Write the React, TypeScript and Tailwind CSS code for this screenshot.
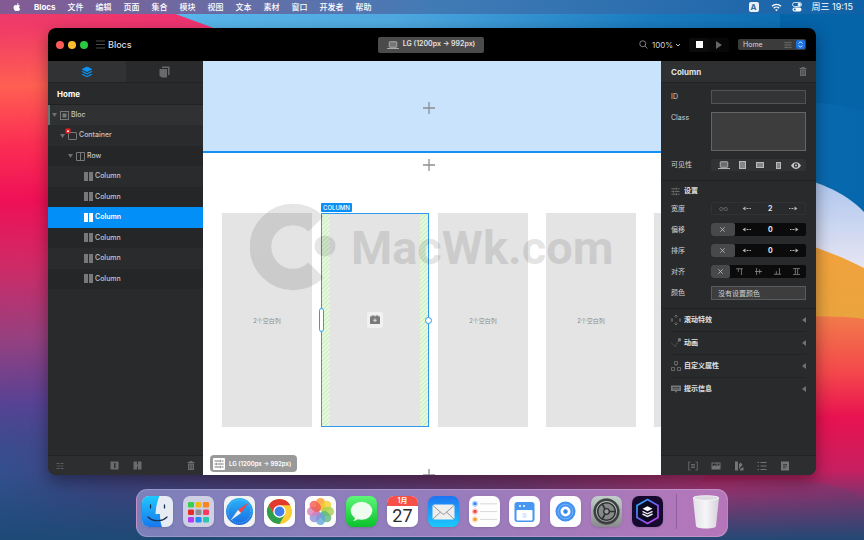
import React from 'react';

const MENUS = ['文件', '编辑', '页面', '集合', '模块', '视图', '文本', '素材', '窗口', '开发者', '帮助'];

function Wallpaper() {
  return (
    <svg className="absolute inset-0 h-full w-full" viewBox="0 0 864 540" preserveAspectRatio="none" aria-hidden="true">
      <defs>
        <linearGradient id="sky" x1="0" y1="0" x2="1" y2="0">
          <stop offset="0" stopColor="#5bb8ee" />
          <stop offset="0.35" stopColor="#4fa9e0" />
          <stop offset="0.7" stopColor="#1a7cc0" />
          <stop offset="1" stopColor="#0566ab" />
        </linearGradient>
        <linearGradient id="base" x1="0" y1="0" x2="1" y2="0">
          <stop offset="0" stopColor="#33508f" />
          <stop offset="0.12" stopColor="#42417f" />
          <stop offset="0.35" stopColor="#5c3770" />
          <stop offset="0.6" stopColor="#823069" />
          <stop offset="0.82" stopColor="#c02a6c" />
          <stop offset="1" stopColor="#a52b68" />
        </linearGradient>
        <linearGradient id="floor" x1="0" y1="0" x2="0" y2="1">
          <stop offset="0" stopColor="#1b4a75" stopOpacity="0" />
          <stop offset="1" stopColor="#1b4a75" stopOpacity="0.95" />
        </linearGradient>
        <linearGradient id="leftRed" gradientUnits="userSpaceOnUse" x1="0" y1="0" x2="12" y2="480">
          <stop offset="0" stopColor="#e8386f" />
          <stop offset="0.06" stopColor="#f03c66" />
          <stop offset="0.18" stopColor="#ff5f52" />
          <stop offset="0.3" stopColor="#fb2e53" />
          <stop offset="0.42" stopColor="#ef1057" />
          <stop offset="0.55" stopColor="#d02a66" />
          <stop offset="0.7" stopColor="#98407f" />
          <stop offset="0.84" stopColor="#584294" />
          <stop offset="1" stopColor="#3a4a88" stopOpacity="0" />
        </linearGradient>
        <linearGradient id="topPink" gradientUnits="userSpaceOnUse" x1="20" y1="0" x2="160" y2="0">
          <stop offset="0" stopColor="#ee3470" stopOpacity="0" />
          <stop offset="1" stopColor="#ee3470" />
        </linearGradient>
        <linearGradient id="white" x1="0" y1="0" x2="0" y2="1">
          <stop offset="0" stopColor="#aac4ee" />
          <stop offset="1" stopColor="#eee9f3" />
        </linearGradient>
        <linearGradient id="orange" x1="0" y1="0" x2="0" y2="1">
          <stop offset="0" stopColor="#f2a13d" />
          <stop offset="1" stopColor="#e9a43d" />
        </linearGradient>
        <linearGradient id="rightRed" x1="0" y1="0" x2="0" y2="1">
          <stop offset="0" stopColor="#f27a4a" />
          <stop offset="0.3" stopColor="#f4484b" />
          <stop offset="0.55" stopColor="#e81250" />
          <stop offset="1" stopColor="#b52668" />
        </linearGradient>
      </defs>
      <rect width="864" height="540" fill="url(#base)" />
      <path d="M140 0H864V330H400Z" fill="url(#sky)" />
      <path d="M0 0H130L175 14L216 29L300 480H0Z" fill="url(#leftRed)" />
      <path d="M0 0H130L175 14L216 29H0Z" fill="url(#topPink)" />
      <path d="M780 100C820 102 850 106 864 110V0H780Z" fill="#0563a8" />
      <path d="M780 174C815 179 845 192 864 212V280H780Z" fill="url(#white)" />
      <path d="M780 236C815 246 845 258 864 268V325H780Z" fill="url(#orange)" />
      <path d="M780 318C810 316 845 316 864 319V500C840 480 800 478 700 482L780 400Z" fill="url(#rightRed)" />
      <rect y="470" width="864" height="70" fill="url(#floor)" />
    </svg>
  );
}

function MenuBar() {
  return (
    <header className="relative flex h-[14px] items-center justify-between bg-linear-to-r from-[#835a93] via-[#417bb6] to-[#0e61a7] pr-[11px] pl-[12px] text-[8px] leading-[14px] font-medium text-white">
      <nav className="flex items-center gap-[12px]">
        <svg width="10" height="10" viewBox="0 0 24 24" fill="#fff" aria-label="Apple">
          <path d="M17.1 12.7c0-2.5 2-3.7 2.1-3.8-1.2-1.7-3-1.9-3.6-2-1.500-.15-3 .9-3.800.9-.8 0-2-.9-3.200-.87-1.700.02-3.200.96-4.100 2.450-1.700 3-.4 7.500 1.300 10 .8 1.200 1.800 2.500 3.100 2.450 1.250-.05 1.700-.8 3.250-.8 1.500 0 1.900.8 3.200.78 1.350-.02 2.200-1.200 3-2.400.95-1.400 1.350-2.700 1.350-2.800-.03 0-2.600-1-2.600-3.910zM14.700 5.300c.7-.8 1.150-2 1-3.100-1 .04-2.200.66-2.900 1.480-.63.73-1.200 1.900-1.040 3 1.100.09 2.240-.56 2.940-1.380z" />
        </svg>
        <button type="button" className="font-bold">Blocs</button>
        {MENUS.map((m) => (
          <button type="button" key={m}>{m}</button>
        ))}
      </nav>
      <div className="flex items-center gap-[10px]">
        <span className="mr-[2px] flex h-[10px] w-[10px] items-center justify-center rounded-xs bg-white/90 text-[8px] font-bold text-[#33699c]">A</span>
        <svg width="11" height="9" viewBox="0 0 22 18" fill="none" stroke="#fff" strokeWidth="2.600" aria-label="Wi-Fi">
          <path d="M2 6.500C7 1.500 15 1.500 20 6.500M5.500 10.500c3-3 8-3 11 0" />
          <path d="M11 16.500l-3-3.200c1.700-1.400 4.300-1.400 6 0z" fill="#fff" stroke="none" />
        </svg>
        <svg width="10" height="10" viewBox="0 0 20 20" aria-label="Control center">
          <rect x="1" y="1" width="18" height="8" rx="4" fill="none" stroke="#fff" strokeWidth="1.600" />
          <circle cx="14.500" cy="5" r="3" fill="#fff" />
          <rect x="1" y="11" width="18" height="8" rx="4" fill="#fff" />
          <circle cx="5.500" cy="15" r="2.200" fill="#2a70ae" />
        </svg>
        <time className="text-[9px] font-normal">周三 19:15</time>
      </div>
    </header>
  );
}

function Laptop({ className, w = 12 }: { className?: string; w?: number }) {
  return (
    <svg className={className} width={w} height="10" viewBox="0 0 24 20" fill="none" aria-hidden="true">
      <rect x="4.500" y="3.500" width="15" height="11" rx="1" fill="currentColor" fillOpacity="0.450" stroke="currentColor" strokeWidth="2" />
      <path d="M0 17h24" stroke="currentColor" strokeWidth="2" />
    </svg>
  );
}

function Sliders({ className, size = 10 }: { className?: string; size?: number }) {
  return (
    <svg className={className} width={size} height={size} viewBox="0 0 20 20" fill="none" stroke="currentColor" strokeWidth="1.600" aria-hidden="true">
      <path d="M1 4h10M15 4h4M1 10h3M8 10h11M1 16h10M15 16h4M12.500 1.500v5M5.500 7.500v5M12.500 13.500v5" />
    </svg>
  );
}

function TitleBar() {
  return (
    <div className="grid h-[33px] grid-cols-[1fr_auto_1fr] items-center bg-black pr-[10px] pl-2">
      <div className="flex items-center">
        <div className="mr-2 flex gap-1">
          <button type="button" aria-label="Close" className="h-2 w-2 rounded-full bg-[#fc5b57]" />
          <button type="button" aria-label="Minimise" className="h-2 w-2 rounded-full bg-[#fdbc2e]" />
          <button type="button" aria-label="Zoom" className="h-2 w-2 rounded-full bg-[#29c940]" />
        </div>
        <svg width="9" height="9" viewBox="0 0 9 9" stroke="#4b4b4b" aria-hidden="true">
          <path d="M0 1h9M0 4.500h9M0 8h9" />
        </svg>
        <h1 className="ml-[3px] text-[9px] leading-3 font-medium text-[#dedede]">Blocs</h1>
      </div>
      <button type="button" className="flex h-4 w-[106px] items-center justify-center gap-[4px] rounded-xs bg-[#4b4b4b] text-[7px] font-semibold text-[#e4e4e4]">
        <Laptop className="text-[#a9a9a9]" />
        LG (1200px → 992px)
      </button>
      <div className="flex items-center justify-end">
        <svg width="9" height="9" viewBox="0 0 18 18" fill="none" stroke="#8d8d8d" strokeWidth="1.800" aria-hidden="true">
          <circle cx="7.500" cy="7.500" r="6" />
          <path d="M12 12l5 5" />
        </svg>
        <label className="relative ml-1 flex w-[29px] items-center">
          <select aria-label="Zoom level" className="w-full appearance-none text-[8px] leading-3 text-[#d6d6d6]">
            <option>100%</option>
          </select>
          <svg className="absolute right-0" width="6" height="4" viewBox="0 0 6 4" fill="none" stroke="#c4c4c4" aria-hidden="true">
            <path d="M1 1l2 2 2-2" />
          </svg>
        </label>
        <button type="button" aria-label="Stop" className="ml-2 flex h-[14px] w-5 items-center justify-center rounded-xs bg-[#0b0b0b]">
          <span className="h-[7px] w-[7px] bg-white" />
        </button>
        <button type="button" aria-label="Play" className="flex h-[14px] w-5 items-center justify-center rounded-xs bg-[#070707]">
          <svg width="6" height="8" viewBox="0 0 6 8" fill="#666"><path d="M0 0l6 4-6 4z" /></svg>
        </button>
        <label className="relative ml-[9px] flex h-[11px] w-[68px] items-center rounded-xs bg-[#3b3b3b]">
          <select aria-label="Page" className="w-full appearance-none pl-[5px] text-[7px] leading-[11px] text-[#d8d8d8]">
            <option>Home</option>
          </select>
          <Sliders className="absolute right-[14px] text-[#8b8b8b]" size={8} />
          <svg className="absolute right-px" width="9" height="9" viewBox="0 0 18 18" aria-hidden="true">
            <rect width="18" height="18" rx="4" fill="#1a72e4" />
            <path d="M5.500 7L9 3.500 12.500 7M5.500 11L9 14.500 12.500 11" fill="none" stroke="#fff" strokeWidth="1.800" />
          </svg>
        </label>
      </div>
    </div>
  );
}

type NodeKind = 'bloc' | 'container' | 'row' | 'column';
const TREE: { kind: NodeKind; label: string; selected?: boolean }[] = [
  { kind: 'bloc', label: 'Bloc' },
  { kind: 'container', label: 'Container' },
  { kind: 'row', label: 'Row' },
  { kind: 'column', label: 'Column' },
  { kind: 'column', label: 'Column' },
  { kind: 'column', label: 'Column', selected: true },
  { kind: 'column', label: 'Column' },
  { kind: 'column', label: 'Column' },
  { kind: 'column', label: 'Column' },
];

const ROW_PADDING: Record<NodeKind, string> = {
  bloc: 'pl-[4px]',
  container: 'pl-[12px]',
  row: 'pl-[20px]',
  column: 'pl-[36px]',
};

function NodeIcon({ kind, selected }: { kind: NodeKind; selected?: boolean }) {
  const c = selected ? '#ffffff' : '#77787a';
  return (
    <svg className="overflow-visible" width="9" height="9" viewBox="0 0 9 9" fill="none" stroke={c} aria-hidden="true">
      {kind === 'bloc' && (
        <>
          <rect x="0.500" y="0.500" width="8" height="8" />
          <rect x="2.500" y="2.500" width="4" height="4" fill={c} stroke="none" />
        </>
      )}
      {kind === 'container' && (
        <>
          <rect x="0.500" y="1.500" width="8" height="7" rx="0.500" />
          <rect x="-2.500" y="-2.500" width="5" height="5" rx="0.500" fill="#ee1c25" stroke="none" />
          <rect x="-1" y="-0.500" width="2" height="1.500" fill="#fff" stroke="none" />
        </>
      )}
      {kind === 'row' && <path d="M0.500 0.500h8v8h-8zM4.500 0.500v8" />}
      {kind === 'column' && <path d="M0 0h4v9H0zM5 0h4v9H5z" fill={c} stroke="none" />}
    </svg>
  );
}

function TreePanel() {
  return (
    <aside className="flex w-[155px] shrink-0 flex-col bg-[#292a2b] text-[#c4c4c4]">
      <div className="grid h-[22px] grid-cols-2 border-b border-[#222324]">
        <button type="button" aria-label="Layers" className="flex items-center justify-center bg-[#303234]">
          <svg width="12" height="12" viewBox="0 0 24 24" fill="#0b93f6">
            <path d="M12 1l11 5.500L12 12 1 6.500z" />
            <path d="M3.600 10L1 11.500 12 17l11-5.500-2.600-1.500L12 14.300zM3.600 15.500L1 17l11 5.500L23 17l-2.600-1.500-8.400 4.300z" />
          </svg>
        </button>
        <button type="button" aria-label="Assets" className="flex items-center justify-center">
          <svg width="11" height="12" viewBox="0 0 22 24" fill="#68696a">
            <path d="M6 1h15v17h-3V4H6z" />
            <path d="M1 6h15v17H5l-4-4z" />
          </svg>
        </button>
      </div>
      <h2 className="flex h-[22px] items-center border-b border-[#202122] pl-[9px] text-[8px] font-bold text-white">Home</h2>
      <ul className="grid h-[184px] auto-rows-fr">
        {TREE.map((n, i) => (
          <li
            key={i}
            className={n.selected ? 'bg-[#038ff8] text-white' : i === 0 ? 'border-l-2 border-[#6a7470] bg-[#303132]' : i % 2 ? 'bg-[#2a2b2c]' : 'bg-[#252628]'}
          >
            <button
              type="button"
              className={`flex h-full w-full items-center text-left text-[7px] ${n.selected ? 'font-semibold' : 'font-medium'} ${i === 0 ? 'pl-[2px]' : ROW_PADDING[n.kind]}`}
            >
              {n.kind !== 'column' && (
                <svg className="mr-[3px]" width="5" height="4" viewBox="0 0 5 4" fill="#6e6f70" aria-hidden="true">
                  <path d="M0 0h5L2.500 4z" />
                </svg>
              )}
              <NodeIcon kind={n.kind} selected={n.selected} />
              <span className="ml-[2px]">{n.label}</span>
            </button>
          </li>
        ))}
      </ul>
      <div className="mt-auto flex h-5 items-center border-t border-[#222324] bg-[#2c2e2f] px-2 text-[#6a6b6c]">
        <button type="button" aria-label="Tree options" className="mr-auto">
          <svg width="8" height="8" viewBox="0 0 16 16" stroke="currentColor" strokeWidth="1.600">
            <path d="M1 3h6M9 3h6M5 8h4M11 8h3M1 13h6M9 13h6M1 8h2" />
          </svg>
        </button>
        <button type="button" aria-label="Insert row">
          <svg width="9" height="9" viewBox="0 0 18 18" fill="currentColor">
            <path fillRule="evenodd" d="M1 1h16v16H1zM8 4v10h3V4z" />
          </svg>
        </button>
        <button type="button" aria-label="Split column" className="mr-[45px] ml-[14px]">
          <svg width="9" height="9" viewBox="0 0 18 18" fill="currentColor">
            <path d="M1 1h7v6h2V1h7v16h-7v-6H8v6H1z" />
          </svg>
        </button>
        <button type="button" aria-label="Delete"><Trash /></button>
      </div>
    </aside>
  );
}

function Trash() {
  return (
    <svg width="8" height="9" viewBox="0 0 16 18" fill="#6a6b6c" aria-hidden="true">
      <path d="M5 0h6v2h4v2H1V2h4z" />
      <path fillRule="evenodd" d="M2 5h12v13H2zM5 7v9h1V7zm2.500 0v9h1V7zM10 7v9h1V7z" />
    </svg>
  );
}

function Plus() {
  return (
    <svg width="12" height="12" viewBox="0 0 12 12" stroke="#8c9093" aria-hidden="true">
      <path d="M6 0v12M0 6h12" strokeWidth="1.300" />
    </svg>
  );
}

function EmptyColumn({ label }: { label?: string }) {
  return (
    <div className="w-[108px] shrink-0 px-[9px]">
      <div className="flex h-full items-center justify-center bg-[#e4e4e4] text-[6px] text-[#8c8c8c]">{label}</div>
    </div>
  );
}

const HATCH = 'w-[8px] bg-[repeating-linear-gradient(135deg,#e6fadd_0px,#e6fadd_1px,#cdeac2_2px,#e6fadd_3px)]';

function Canvas() {
  return (
    <main className="relative min-w-0 flex-1 overflow-hidden bg-white">
      <section className="flex h-[92px] items-center justify-center border-b-2 border-[#1390f5] bg-[#c9e3fd] pt-1 pr-[7px]">
        <button type="button" aria-label="Add bloc above"><Plus /></button>
      </section>
      <div className="flex h-6 items-center justify-center pr-[7px]">
        <button type="button" aria-label="Add bloc"><Plus /></button>
      </div>
      <section className="mt-9 ml-[10px] flex h-[214px]">
        <EmptyColumn label="2个空白列" />
        <div className="relative flex w-[108px] shrink-0 justify-between border border-[#2d9af0] bg-[#e4e4e4]">
          <span className="absolute -top-[11px] -left-px flex h-[9px] items-center rounded-[1px] bg-[#0b8ff5] px-[2px] text-[6px] font-medium text-white">COLUMN</span>
          <div className={HATCH} />
          <button type="button" aria-label="Add brick" className="flex h-4 w-4 items-center justify-center self-center rounded-xs bg-[#f1f1f1]">
            <svg width="10" height="10" viewBox="0 0 20 20" fill="#7b7b7b">
              <path d="M3 1h6v2h2V1h6v2h3v15H0V3h3z" />
              <path d="M10 7v7M6.500 10.500h7" stroke="#f4f4f4" strokeWidth="1.600" />
            </svg>
          </button>
          <div className={HATCH} />
          <span className="absolute top-[94px] -left-[3px] h-6 w-[5px] rounded-full border border-[#2d9af0] bg-white" />
          <span className="absolute top-[103px] -right-[4px] h-[7px] w-[7px] rounded-full border border-[#2d9af0] bg-white" />
        </div>
        <EmptyColumn label="2个空白列" />
        <EmptyColumn label="2个空白列" />
        <EmptyColumn />
      </section>
      <div className="mt-[42px] -mb-[6px] flex justify-center pr-[7px]">
        <button type="button" aria-label="Add bloc below"><Plus /></button>
      </div>

      <div className="pointer-events-none absolute top-[142px] left-[47px] flex items-center text-black opacity-10">
        <svg width="88" height="88" viewBox="0 0 88 88" aria-hidden="true">
          <path d="M66 21A32.500 32.500 0 1 0 66 67" fill="none" stroke="currentColor" strokeWidth="21.500" />
          <circle cx="75" cy="43" r="10.500" fill="currentColor" />
        </svg>
        <span className="ml-[13px] text-[47px] leading-none font-bold [font-family:Roboto,'Liberation_Sans',sans-serif]">MacWk.com</span>
      </div>

      <button type="button" className="absolute bottom-[3px] left-[7px] flex h-[17px] w-[87px] items-center gap-1 rounded-sm bg-[#999] pl-[3px] text-[6px] font-semibold text-white">
        <span className="flex h-3 w-3 items-center justify-center rounded-[1px] bg-white text-[#555]"><Sliders /></span>
        LG (1200px → 992px)
      </button>
    </main>
  );
}

function Field({ id, label, tall, children }: { id?: string; label: string; tall?: boolean; children: React.ReactNode }) {
  return (
    <div className={`flex ${tall ? 'items-start' : 'items-center'}`}>
      <label htmlFor={id} className="w-10 shrink-0 text-[7px] leading-[12px] text-[#d0d1d2]">{label}</label>
      {children}
    </div>
  );
}

function Arrow({ right }: { right?: boolean }) {
  return (
    <svg width="9" height="5" viewBox="0 0 18 10" fill="#b5b5b5" aria-hidden="true">
      {right ? <path d="M17 5l-6-4v8zM0 4h3v2H0zM5 4h4v2H5z" /> : <path d="M1 5l6-4v8zM15 4h3v2h-3zM9 4h4v2H9z" />}
    </svg>
  );
}

function Stepper({ id, label, value, linked }: { id: string; label: string; value: string; linked?: boolean }) {
  return (
    <div className={`grid h-[13px] flex-1 grid-cols-4 overflow-hidden rounded-xs ${linked ? 'border border-[#313233]' : 'bg-[#0b0b0c]'}`}>
      <button type="button" aria-label={`${label} auto`} className={`flex items-center justify-center rounded-xs ${linked ? '' : 'bg-[#47494a]'}`}>
        {linked ? (
          <svg width="9" height="6" viewBox="0 0 18 10" fill="none" stroke="#7a7b7c" strokeWidth="1.600">
            <path d="M9 5C7 2 2 0 1.500 5S7 8 9 5s7-5 7.500 0S11 8 9 5z" />
          </svg>
        ) : (
          <Cross />
        )}
      </button>
      <button type="button" aria-label={`${label} decrease`} className="flex items-center justify-center"><Arrow /></button>
      <input id={id} defaultValue={value} className="w-full min-w-0 bg-transparent text-center text-[7px] leading-[11px] font-bold text-[#e6e6e6]" />
      <button type="button" aria-label={`${label} increase`} className="flex items-center justify-center"><Arrow right /></button>
    </div>
  );
}

function Cross() {
  return (
    <svg width="5" height="5" viewBox="0 0 5 5" stroke="#c4c4c4" strokeWidth="0.800" aria-hidden="true">
      <path d="M0.300 0.300l4.400 4.400M4.700 0.300L0.300 4.700" />
    </svg>
  );
}

const ALIGN_PATHS = ['M0 1h9M3 1v4M7 1v8', 'M2 0v9M6 1.500v6M0 4.500h9', 'M0 8h9M3 4v4M7 0v8', 'M0 0.500h9M0 8.500h9M3 1v7M6 1v7'];

const VIS_ICONS: { label: string; node: React.ReactNode }[] = [
  { label: 'Laptop', node: <Laptop /> },
  { label: 'Tablet portrait', node: <Device w={7} h={8} /> },
  { label: 'Tablet landscape', node: <Device w={8} h={6} /> },
  { label: 'Phone', node: <Device w={5} h={7} /> },
  {
    label: 'Visible',
    node: (
      <svg width="10" height="7" viewBox="0 0 20 14" fill="#c8c8c8">
        <path fillRule="evenodd" d="M0 7c5-9 15-9 20 0-5 9-15 9-20 0zm10-4.500a4.500 4.500 0 1 0 0 9 4.500 4.500 0 0 0 0-9zm0 2.500a2 2 0 1 1 0 4 2 2 0 0 1 0-4z" />
      </svg>
    ),
  },
];

function Device({ w, h }: { w: number; h: number }) {
  return (
    <svg width={w} height={h} aria-hidden="true">
      <rect x="0.500" y="0.500" width={w - 1} height={h - 1} fill="#858585" stroke="#b9b9b9" />
    </svg>
  );
}

const SECTION_ICONS: Record<string, React.ReactNode> = {
  滚动特效: <path d="M5 0v3M3.500 1.500L5 0l1.500 1.500M5 7v3M3.500 8.500L5 10l1.500-1.500M0 5h2M8 5h2M1 3v4M9 3v4" />,
  动画: (
    <>
      <path d="M0 4.500l4 4 4-6" strokeDasharray="1.500 1.200" />
      <circle cx="8.500" cy="1.800" r="1.700" fill="currentColor" stroke="none" />
    </>
  ),
  自定义属性: <path d="M3.500 0.500h3v3h-3zM0.500 6.500h3v3h-3zM6.500 6.500h3v3h-3zM5 4v1" />,
  提示信息: (
    <>
      <path d="M0 1.500h10v5.500H6L5 9 4 7H0z" fill="currentColor" stroke="none" />
      <path d="M1.500 3.500h7M1.500 5h7" stroke="#292a2b" strokeWidth="0.600" />
    </>
  ),
};

const FOOT_ICONS: { label: string; node: React.ReactNode }[] = [
  { label: 'Custom code', node: <path d="M2.500 1H0.700v8h1.800M7.500 1h1.800v8H7.500M3 3.500h4M3 6.500h4M3 5h4" fill="none" stroke="currentColor" strokeWidth="0.800" /> },
  { label: 'Images', node: <path fillRule="evenodd" d="M0.500 1.500h9v7h-9zM1.500 5.500l2-1.500 2 1.500v-3h-4zM6.500 2.500v2h2v-2z" /> },
  { label: 'Swatches', node: <path d="M1 0.500h3v9H1zM5 3l2-1.500 1.500 2.500L5 8zM6 8l3.500-2v3.500H6z" /> },
  { label: 'List', node: <path d="M0.500 1.500H2M0.500 5H2M0.500 8.500H2M3.500 1.500h6M3.500 5h6M3.500 8.500h6" fill="none" stroke="currentColor" strokeWidth="1.200" /> },
  { label: 'Notes', node: <path fillRule="evenodd" d="M1 0.500h8v9H1zM3 3v0.800h4V3zm0 1.700v0.800h4V4.700zm0 1.700v0.800h2.500V6.400z" /> },
];

function Inspector() {
  return (
    <aside className="flex w-[155px] shrink-0 flex-col bg-[#292a2b]">
      <div className="flex h-[22px] items-center justify-between border-b border-[#222324] bg-[#2e3031] pr-[9px] pl-[10px]">
        <h2 className="text-[8px] leading-3 font-bold text-[#e2e2e2]">Column</h2>
        <button type="button" aria-label="Delete column"><Trash /></button>
      </div>
      <div className="flex flex-col border-b border-[#202122] px-[10px] pt-[7px] pb-[9px]">
        <Field id="col-id" label="ID">
          <input id="col-id" className="h-[14px] min-w-0 flex-1 border border-[#525354] bg-[#333435] px-1 text-[7px] text-white" />
        </Field>
        <div className="my-2">
          <Field id="col-class" label="Class" tall>
            <textarea id="col-class" className="block h-[39px] min-w-0 flex-1 resize-none border border-[#646566] bg-[#3d3d3d] px-1 text-[7px] text-white" />
          </Field>
        </div>
        <Field label="可见性">
          <div className="grid h-3 flex-1 grid-cols-5 rounded-xs bg-[#303233] px-px pl-1 text-[#b0b0b0]">
            {VIS_ICONS.map((v) => (
              <button type="button" key={v.label} aria-label={v.label} className="flex items-center justify-center">{v.node}</button>
            ))}
          </div>
        </Field>
      </div>
      <div className="border-b border-[#202122] px-[10px] pb-2">
        <h3 className="flex h-[21px] items-center gap-1 text-[7px] font-bold text-[#e2e2e2]">
          <Sliders className="text-[#8a8b8c]" size={9} />
          设置
        </h3>
        <div className="flex flex-col gap-2">
          <Field id="w" label="宽度"><Stepper id="w" label="宽度" value="2" linked /></Field>
          <Field id="offset" label="偏移"><Stepper id="offset" label="偏移" value="0" /></Field>
          <Field id="order" label="排序"><Stepper id="order" label="排序" value="0" /></Field>
          <Field label="对齐">
            <div className="grid h-[13px] flex-1 grid-cols-5 overflow-hidden rounded-xs bg-[#0b0b0c]">
              <button type="button" aria-label="No alignment" className="flex items-center justify-center rounded-xs bg-[#47494a]"><Cross /></button>
              {ALIGN_PATHS.map((d, i) => (
                <button type="button" key={d} aria-label={`Align ${i + 1}`} className="flex items-center justify-center">
                  <svg width="7" height="7" viewBox="0 0 9 9" fill="none" stroke="#8f8f8f"><path d={d} /></svg>
                </button>
              ))}
            </div>
          </Field>
          <Field id="colour" label="颜色">
            <input id="colour" defaultValue="没有设置颜色" className="h-[14px] min-w-0 flex-1 border border-[#5a5b5c] bg-[#3d3d3d] px-[6px] text-[7px] text-[#d0d0d0]" />
          </Field>
        </div>
      </div>
      {Object.keys(SECTION_ICONS).map((name) => (
        <button
          type="button"
          key={name}
          className="mx-[10px] flex h-[23px] items-center gap-[3px] border-b border-[#222324] text-[7px] font-bold text-[#e2e2e2] last-of-type:border-transparent"
        >
          <svg className="text-[#77787a]" width="10" height="10" viewBox="0 0 10 10" fill="none" stroke="currentColor" strokeWidth="0.800" aria-hidden="true">
            {SECTION_ICONS[name]}
          </svg>
          {name}
          <svg className="ml-auto" width="4" height="6" viewBox="0 0 4 6" fill="#707172" aria-hidden="true"><path d="M4 0v6L0 3z" /></svg>
        </button>
      ))}
      <div className="mt-auto flex h-5 items-center justify-center gap-[13px] border-t border-[#222324] bg-[#2c2e2f] text-[#737475]">
        {FOOT_ICONS.map((f) => (
          <button type="button" key={f.label} aria-label={f.label}>
            <svg width="10" height="10" viewBox="0 0 10 10" fill="currentColor">{f.node}</svg>
          </button>
        ))}
      </div>
    </aside>
  );
}

function Tile({ name, fill, children }: { name: string; fill: string; children: React.ReactNode }) {
  return (
    <button type="button" aria-label={name} className="overflow-hidden rounded-[7px] shadow-sm">
      <svg width="31" height="31" viewBox="0 0 31 31">
        <rect width="31" height="31" fill={fill} />
        {children}
      </svg>
    </button>
  );
}

const LAUNCH = ['#35d052', '#f5b916', '#fb8420', '#e42a2a', '#8b8d92', '#f73c60', '#b13df2', '#1f8cf5', '#2bc7b0'];
const PETALS = ['#fb9a28', '#f3cf2c', '#a8cf4b', '#5cb878', '#5fa8d8', '#8f8fd6', '#d77fb8', '#f05a50'];

function Dock() {
  return (
    <footer className="relative mx-auto mt-[14px] mb-[3px] flex h-12 w-[592px] items-center rounded-[11px] border border-white/20 bg-linear-to-r from-[#7c80ba] via-[#967dbd] to-[#b576b9] pb-[3px] pl-[5px]">
      <svg width="0" height="0" className="absolute" aria-hidden="true">
        <defs>
          <linearGradient id="dFinder" x1="0" y1="0" x2="0" y2="1"><stop offset="0" stopColor="#1fc8fb" /><stop offset="1" stopColor="#1877ef" /></linearGradient>
          <linearGradient id="dSafari" x1="0" y1="0" x2="0" y2="1"><stop offset="0" stopColor="#29b4f7" /><stop offset="1" stopColor="#1a6be0" /></linearGradient>
          <linearGradient id="dMsg" x1="0" y1="0" x2="0" y2="1"><stop offset="0" stopColor="#5df777" /><stop offset="1" stopColor="#0ac12b" /></linearGradient>
          <linearGradient id="dMail" x1="0" y1="0" x2="0" y2="1"><stop offset="0" stopColor="#1e74f2" /><stop offset="1" stopColor="#1bc9fc" /></linearGradient>
          <linearGradient id="dPref" x1="0" y1="0" x2="0" y2="1"><stop offset="0" stopColor="#c2cfc9" /><stop offset="1" stopColor="#898b8c" /></linearGradient>
          <linearGradient id="dHex" x1="0" y1="0" x2="1" y2="1"><stop offset="0" stopColor="#19b9fb" /><stop offset="0.500" stopColor="#6f60f5" /><stop offset="1" stopColor="#d43df0" /></linearGradient>
          <linearGradient id="dBin" x1="0" y1="0" x2="1" y2="0"><stop offset="0" stopColor="#e2e1e6" /><stop offset="0.500" stopColor="#f6f5f8" /><stop offset="1" stopColor="#d4d0da" /></linearGradient>
        </defs>
      </svg>
      <div className="flex w-[521px] justify-between">
        <Tile name="Finder" fill="#e7ebf3">
          <path d="M0 0H17.500C15 6 14 11 13.500 18H18C18 23 18.500 27 20 31H0z" fill="url(#dFinder)" />
          <path d="M8.500 9v3M22.500 9v3" stroke="#18304e" strokeWidth="1.300" strokeLinecap="round" />
          <path d="M6 21c5 5 14 5 19 0" fill="none" stroke="#18304e" strokeWidth="1.200" strokeLinecap="round" />
        </Tile>
        <Tile name="Launchpad" fill="#cfd0e4">
          {LAUNCH.map((c, i) => (
            <rect key={c} x={5 + (i % 3) * 7.500} y={6 + Math.floor(i / 3) * 7.500} width="6" height="5.500" rx="1.200" fill={c} />
          ))}
        </Tile>
        <Tile name="Safari" fill="#f2f2f3">
          <circle cx="15.500" cy="15.500" r="13.500" fill="url(#dSafari)" />
          <circle cx="15.500" cy="15.500" r="11.500" fill="none" stroke="#a5dafa" strokeWidth="1" strokeDasharray="0.500 1.300" />
          <path d="M24.500 6.500L17 17l-3-3z" fill="#fb4340" />
          <path d="M6.500 24.500L14 14l3 3z" fill="#f2f2f4" />
        </Tile>
        <Tile name="Chrome" fill="#fff">
          <circle cx="15.500" cy="15.500" r="12.500" fill="#fbcc34" />
          <path d="M4.670 9.250A12.500 12.500 0 0 1 26.330 9.250H15.500L10.100 18.600z" fill="#e23b2e" />
          <path d="M4.670 9.250A12.500 12.500 0 0 0 15.500 28L20.900 18.620 15.500 21.700 10.100 18.620z" fill="#2f9e4c" />
          <circle cx="15.500" cy="15.500" r="6.200" fill="#fff" />
          <circle cx="15.500" cy="15.500" r="4.900" fill="#3f7fec" />
        </Tile>
        <Tile name="Photos" fill="#fcfcfc">
          {PETALS.map((c, i) => (
            <rect key={c} x="11" y="2" width="9" height="12.500" rx="4.500" fill={c} fillOpacity="0.800" transform={`rotate(${i * 45} 15.500 15.500)`} />
          ))}
        </Tile>
        <Tile name="Messages" fill="url(#dMsg)">
          <ellipse cx="15.500" cy="14.800" rx="10.800" ry="9" fill="#eefbef" />
          <path d="M9 21c0 2-1 3.300-2 4 2.300 0 4-1 5.500-2.500z" fill="#e4f6e6" />
        </Tile>
        <button type="button" aria-label="Calendar" className="flex h-[31px] w-[31px] flex-col overflow-hidden rounded-[7px] bg-white text-center shadow-sm">
          <span className="h-[10px] w-full bg-[#f65049] text-[7px] leading-[10px] font-semibold text-white">1月</span>
          <span className="w-full text-[18px] leading-5 text-[#2b2b2b] [font-family:Roboto,sans-serif]">27</span>
        </button>
        <Tile name="Mail" fill="url(#dMail)">
          <rect x="4.500" y="8.500" width="22" height="15" rx="1.800" fill="#eeeeee" />
          <path d="M5 9.500l9 8c1 .8 2 .8 3 0l9-8M5 23l7.500-7M26 23l-7.500-7" fill="none" stroke="#8d8d90" strokeWidth="0.900" />
        </Tile>
        <Tile name="Reminders" fill="#fdfdfd">
          {['#2c86f3', '#f0433a', '#f39a2c'].map((c, i) => (
            <g key={c}>
              <circle cx="6" cy={7.800 + i * 7.800} r="2.700" fill="none" stroke={c} strokeOpacity="0.450" strokeWidth="0.800" />
              <circle cx="6" cy={7.800 + i * 7.800} r="1.800" fill={c} />
              <path d={`M11 ${7.800 + i * 7.800}h17`} stroke="#cfcfcf" strokeWidth="0.800" />
            </g>
          ))}
        </Tile>
        <Tile name="Site manager" fill="#fdfdff">
          <rect x="5.500" y="6" width="20" height="20" rx="3" fill="#4796f2" />
          <circle cx="11" cy="10" r="1" fill="#fff" /><circle cx="15" cy="10" r="1" fill="#fff" />
          <rect x="7.500" y="14" width="16" height="10.500" rx="1" fill="#fff" />
          <rect x="13.500" y="17" width="4" height="5" fill="#dbeafd" />
        </Tile>
        <Tile name="Media player" fill="#fdfdff">
          <circle cx="15.500" cy="15.500" r="7.500" fill="#fff" stroke="#4392f1" strokeWidth="5" />
          <circle cx="15.500" cy="15.500" r="7.300" fill="none" stroke="#79b4f7" strokeWidth="1" />
          <circle cx="15.500" cy="15.500" r="2.200" fill="#3585ec" />
        </Tile>
        <Tile name="System preferences" fill="url(#dPref)">
          <circle cx="15.500" cy="15.500" r="11.800" fill="none" stroke="#3a3c3e" strokeWidth="2.400" />
          <circle cx="15.500" cy="15.500" r="12.700" fill="none" stroke="#55585a" strokeWidth="1" strokeDasharray="0.800 0.700" />
          <circle cx="15.500" cy="15.500" r="8.800" fill="#85898a" stroke="#2e3032" strokeWidth="1.500" />
          <path d="M15.500 15.500h9M15.500 15.500l-4.500-8M15.500 15.500l-4.500 8" stroke="#2e3032" strokeWidth="1.600" />
          <circle cx="15.500" cy="15.500" r="2.800" fill="#9a9d9f" stroke="#2e3032" strokeWidth="1.300" />
        </Tile>
        <Tile name="Blocs" fill="#150a2e">
          <path d="M15.500 3.500l10.500 6v12l-10.500 6-10.500-6v-12z" fill="#0d0821" stroke="url(#dHex)" strokeWidth="1.700" strokeLinejoin="round" />
          <path d="M10.500 18l5 2.500 5-2.500M10.500 15.300l5 2.500 5-2.500" fill="none" stroke="#e8e8ee" strokeWidth="1.400" />
          <path d="M15.500 10.300l5 2.500-5 2.500-5-2.500z" fill="#fff" />
        </Tile>
      </div>
      <span className="ml-[13px] h-[35px] w-px bg-[#8e5f9d]" />
      <button type="button" aria-label="Trash" className="ml-[15px]">
        <svg width="28" height="34" viewBox="0 0 28 34">
          <path d="M1 3l3 28c.3 1.500 3 2.500 10 2.500s9.700-1 10-2.500l3-28z" fill="url(#dBin)" />
          <ellipse cx="14" cy="3" rx="13" ry="2.300" fill="#dddbe2" stroke="#f5f4f8" strokeWidth="0.900" />
        </svg>
      </button>
    </footer>
  );
}

export default function App() {
  return (
    <div className="relative flex min-h-screen flex-col overflow-hidden [font-family:Inter,'Noto_Sans_CJK_SC',sans-serif]">
      <Wallpaper />
      <MenuBar />
      <div className="relative mx-12 mt-[14px] flex flex-1 flex-col overflow-hidden rounded-lg shadow-[0_6px_16px_rgba(0,0,0,0.4)]">
        <TitleBar />
        <div className="flex min-h-0 flex-1">
          <TreePanel />
          <Canvas />
          <Inspector />
        </div>
      </div>
      <Dock />
    </div>
  );
}
